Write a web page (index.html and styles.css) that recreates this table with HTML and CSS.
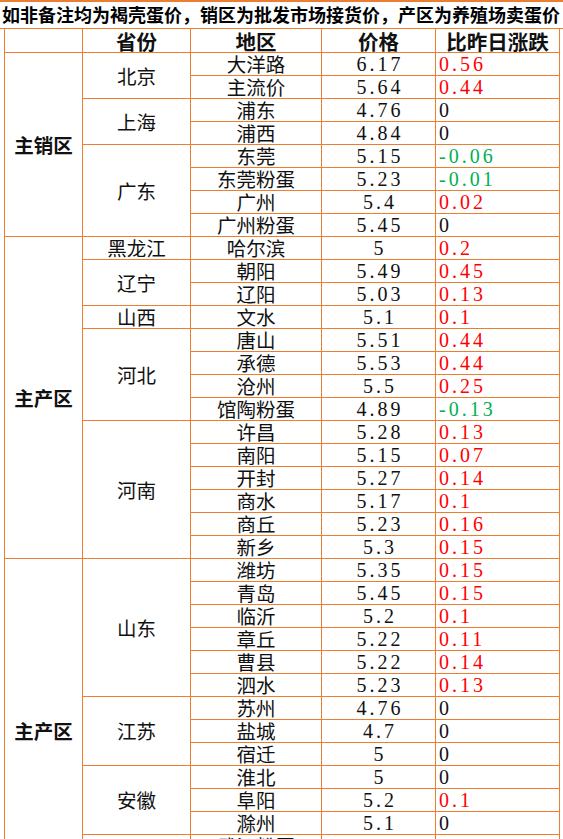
FILE: index.html
```html
<!DOCTYPE html>
<html lang="zh-CN">
<head>
<meta charset="utf-8">
<title>蛋价</title>
<link rel="stylesheet" href="styles.css">
</head>
<body>
<div class="title">如非备注均为褐壳蛋价，销区为批发市场接货价，产区为养殖场卖蛋价</div>
<table class="grid">
<colgroup>
<col class="c1"><col class="c2"><col class="c3"><col class="c4"><col class="c5">
</colgroup>
<thead>
<tr class="head"><th></th><th>省份</th><th>地区</th><th>价格</th><th>比昨日涨跌</th></tr>
</thead>
<tbody>
<tr><td class="zone" rowspan="8">主销区</td><td class="prov" rowspan="2">北京</td><td class="area">大洋路</td><td class="price">6.17</td><td class="chg up">0.56</td></tr>
<tr><td class="area">主流价</td><td class="price">5.64</td><td class="chg up">0.44</td></tr>
<tr><td class="prov" rowspan="2">上海</td><td class="area">浦东</td><td class="price">4.76</td><td class="chg">0</td></tr>
<tr><td class="area">浦西</td><td class="price">4.84</td><td class="chg">0</td></tr>
<tr><td class="prov" rowspan="4">广东</td><td class="area">东莞</td><td class="price">5.15</td><td class="chg down">-0.06</td></tr>
<tr><td class="area">东莞粉蛋</td><td class="price">5.23</td><td class="chg down">-0.01</td></tr>
<tr><td class="area">广州</td><td class="price">5.4</td><td class="chg up">0.02</td></tr>
<tr><td class="area">广州粉蛋</td><td class="price">5.45</td><td class="chg">0</td></tr>

<tr><td class="zone" rowspan="14">主产区</td><td class="prov">黑龙江</td><td class="area">哈尔滨</td><td class="price">5</td><td class="chg up">0.2</td></tr>
<tr><td class="prov" rowspan="2">辽宁</td><td class="area">朝阳</td><td class="price">5.49</td><td class="chg up">0.45</td></tr>
<tr><td class="area">辽阳</td><td class="price">5.03</td><td class="chg up">0.13</td></tr>
<tr><td class="prov">山西</td><td class="area">文水</td><td class="price">5.1</td><td class="chg up">0.1</td></tr>
<tr><td class="prov" rowspan="4">河北</td><td class="area">唐山</td><td class="price">5.51</td><td class="chg up">0.44</td></tr>
<tr><td class="area">承德</td><td class="price">5.53</td><td class="chg up">0.44</td></tr>
<tr><td class="area">沧州</td><td class="price">5.5</td><td class="chg up">0.25</td></tr>
<tr><td class="area">馆陶粉蛋</td><td class="price">4.89</td><td class="chg down">-0.13</td></tr>
<tr><td class="prov" rowspan="6">河南</td><td class="area">许昌</td><td class="price">5.28</td><td class="chg up">0.13</td></tr>
<tr><td class="area">南阳</td><td class="price">5.15</td><td class="chg up">0.07</td></tr>
<tr><td class="area">开封</td><td class="price">5.27</td><td class="chg up">0.14</td></tr>
<tr><td class="area">商水</td><td class="price">5.17</td><td class="chg up">0.1</td></tr>
<tr><td class="area">商丘</td><td class="price">5.23</td><td class="chg up">0.16</td></tr>
<tr><td class="area">新乡</td><td class="price">5.3</td><td class="chg up">0.15</td></tr>

<tr><td class="zone" rowspan="15">主产区</td><td class="prov" rowspan="6">山东</td><td class="area">潍坊</td><td class="price">5.35</td><td class="chg up">0.15</td></tr>
<tr><td class="area">青岛</td><td class="price">5.45</td><td class="chg up">0.15</td></tr>
<tr><td class="area">临沂</td><td class="price">5.2</td><td class="chg up">0.1</td></tr>
<tr><td class="area">章丘</td><td class="price">5.22</td><td class="chg up">0.11</td></tr>
<tr><td class="area">曹县</td><td class="price">5.22</td><td class="chg up">0.14</td></tr>
<tr><td class="area">泗水</td><td class="price">5.23</td><td class="chg up">0.13</td></tr>
<tr><td class="prov" rowspan="3">江苏</td><td class="area">苏州</td><td class="price">4.76</td><td class="chg">0</td></tr>
<tr><td class="area">盐城</td><td class="price">4.7</td><td class="chg">0</td></tr>
<tr><td class="area">宿迁</td><td class="price">5</td><td class="chg">0</td></tr>
<tr><td class="prov" rowspan="3">安徽</td><td class="area">淮北</td><td class="price">5</td><td class="chg">0</td></tr>
<tr><td class="area">阜阳</td><td class="price">5.2</td><td class="chg up">0.1</td></tr>
<tr><td class="area">滁州</td><td class="price">5.1</td><td class="chg">0</td></tr>
<tr><td class="prov" rowspan="3">湖北</td><td class="area">武汉粉蛋</td><td class="price">5.2</td><td class="chg">0</td></tr>
<tr><td class="area">武汉</td><td class="price">5.1</td><td class="chg">0</td></tr>
<tr><td class="area">宜昌</td><td class="price">5.1</td><td class="chg">0</td></tr>
</tbody>
</table>
</body>
</html>
```

FILE: styles.css
```css
html, body {
  margin: 0;
  padding: 0;
  background: #ffffff;
}

body {
  width: 563px;
  overflow: hidden;
  color: #111111;
  font-family: "Noto Sans CJK SC", sans-serif;
}

.title {
  box-sizing: border-box;
  height: 29px;
  border-top: 2px solid #ed7d31;
  border-bottom: 1px solid #ed7d31;
  padding-left: 2px;
  font-size: 18px;
  font-weight: 700;
  line-height: 25px;
  white-space: nowrap;
  color: #000000;
}

.grid {
  margin-left: 4px;
  margin-top: -1px;
  width: 556px;
  table-layout: fixed;
  border-collapse: collapse;
}

.c1 { width: 78px; }
.c2 { width: 108px; }
.c3 { width: 131px; }
.c4 { width: 114px; }
.c5 { width: 124px; }

.grid th,
.grid td {
  border: 1px solid #ed7d31;
  padding: 0;
  height: 22px;
  line-height: 22px;
  text-align: center;
  white-space: nowrap;
  vertical-align: bottom;
}

.grid thead th {
  border-top-color: transparent;
  height: 23px;
  font-size: 20.5px;
  font-weight: 700;
  color: #111111;
}

.grid .zone {
  font-size: 19.5px;
  font-weight: 700;
  vertical-align: middle;
}

.grid .prov {
  font-size: 19.5px;
  vertical-align: middle;
}

.grid .area {
  font-size: 19.5px;
}

.grid .price,
.grid .chg {
  font-family: "Liberation Serif", "Times New Roman", serif;
  font-size: 20px;
  letter-spacing: 3px;
}

.grid .price {
  padding-left: 3px;
}

.grid .chg {
  text-align: left;
  padding-left: 3px;
}

.up { color: #ff0000; }
.down { color: #00b050; }
```
